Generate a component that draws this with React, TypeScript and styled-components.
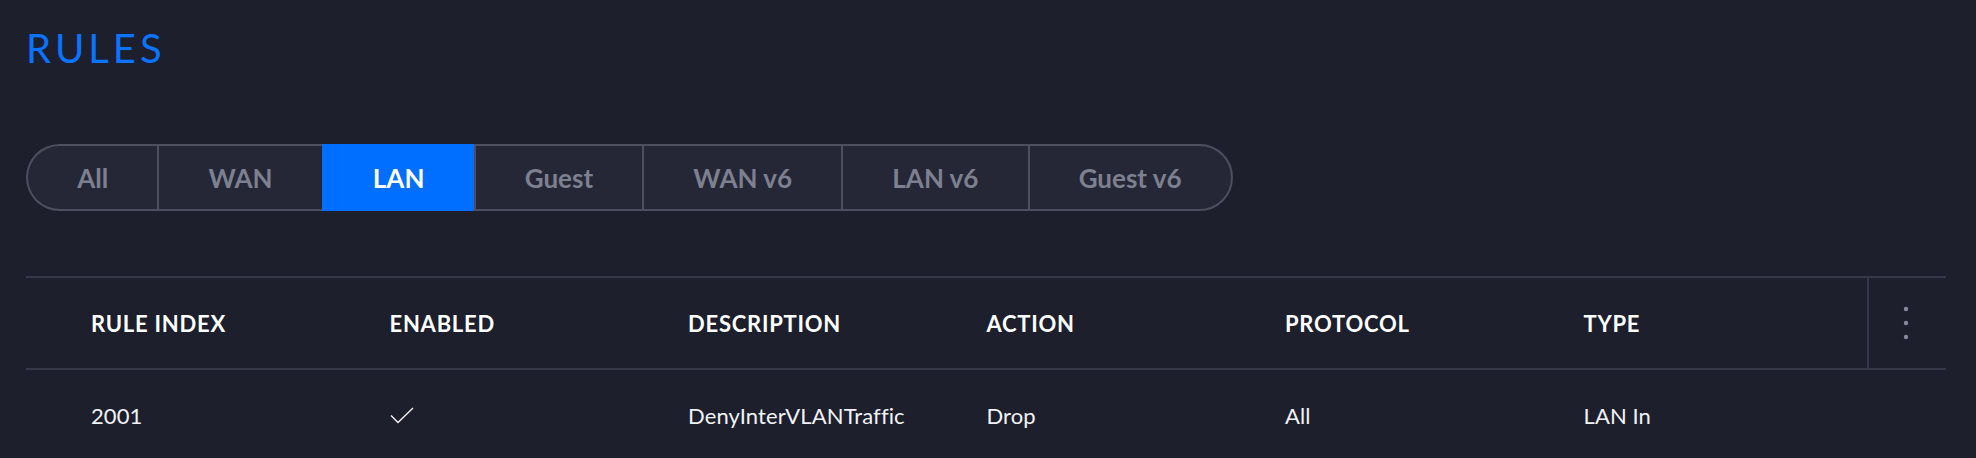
import { ReactElement } from 'react';
import styled, { createGlobalStyle } from 'styled-components';

const GlobalStyle = createGlobalStyle`
  html, body {
    margin: 0;
    padding: 0;
    background-color: #1d1f2d;
    overflow: hidden;
  }
  body {
    font-family: 'Lato', 'Open Sans', sans-serif;
    color: #ffffff;
  }
`;

const Page = styled.div`
  display: flex;
  flex-direction: column;
  align-items: flex-start;
  padding: 24px 30px 0 26px;
`;

const Title = styled.h1`
  margin: 0;
  font-size: 40px;
  line-height: 48px;
  font-weight: 400;
  letter-spacing: 4px;
  color: #0a73ff;
`;

const TabGroup = styled.div`
  display: inline-flex;
  margin-top: 72px;
  height: 67px;
`;

const Tab = styled.div<{ active?: boolean; first?: boolean; last?: boolean }>`
  display: flex;
  align-items: center;
  justify-content: center;
  padding: 0 49.15px;
  font-size: 26px;
  font-weight: 700;
  color: ${({ active }) => (active ? '#ffffff' : '#7d8090')};
  background-color: ${({ active }) => (active ? '#006fff' : '#252736')};
  border: 2px solid ${({ active }) => (active ? '#006fff' : '#4d4f5e')};
  border-right-width: ${({ last }) => (last ? '2px' : '0')};
  border-radius: ${({ first, last }) => (first ? '34px 0 0 34px' : last ? '0 34px 34px 0' : '0')};
`;

const Table = styled.div`
  align-self: stretch;
  margin-top: 65px;
  display: flex;
  flex-direction: column;
`;

const Row = styled.div<{ header?: boolean }>`
  display: flex;
  height: 90px;
  border-top: ${({ header }) => (header ? '2px solid #363848' : 'none')};
  border-bottom: 2px solid #363848;
`;

const Cells = styled.div`
  flex: 1;
  display: grid;
  grid-template-columns: repeat(5, 298.5px) 1fr;
  align-items: center;
  padding-left: 65px;
`;

const Cell = styled.div<{ header?: boolean }>`
  font-size: 22px;
  font-weight: ${({ header }) => (header ? 700 : 400)};
  letter-spacing: ${({ header }) => (header ? '0.75px' : '0.1px')};
  color: ${({ header }) => (header ? '#ffffff' : '#f2f3f6')};
  white-space: nowrap;
`;

const MenuCell = styled.div<{ header?: boolean }>`
  width: 79px;
  display: flex;
  align-items: center;
  justify-content: center;
  padding-right: 3px;
  box-sizing: border-box;
  border-left: 2px solid ${({ header }) => (header ? '#363848' : 'transparent')};
`;

const headers = ['RULE INDEX', 'ENABLED', 'DESCRIPTION', 'ACTION', 'PROTOCOL', 'TYPE'];

const rules = [
  { index: '2001', enabled: true, description: 'DenyInterVLANTraffic', action: 'Drop', protocol: 'All', type: 'LAN In' },
];

const tabs = ['All', 'WAN', 'LAN', 'Guest', 'WAN v6', 'LAN v6', 'Guest v6'];

function Check(): ReactElement {
  return (
    <svg width="24" height="17" viewBox="0 0 24 17" fill="none">
      <polyline points="1,8.5 8,15.5 23,1" stroke="#f2f3f6" strokeWidth="1.4" />
    </svg>
  );
}

function Dots(): ReactElement {
  return (
    <svg width="6" height="34" viewBox="0 0 6 34">
      <circle cx="3" cy="3" r="2.2" fill="#878a99" />
      <circle cx="3" cy="17" r="2.2" fill="#878a99" />
      <circle cx="3" cy="31" r="2.2" fill="#878a99" />
    </svg>
  );
}

function App(): ReactElement {
  const active = 'LAN';
  return (
    <>
      <GlobalStyle />
      <Page>
        <Title>RULES</Title>
        <TabGroup>
          {tabs.map((t, i) => (
            <Tab key={t} active={t === active} first={i === 0} last={i === tabs.length - 1}>
              {t}
            </Tab>
          ))}
        </TabGroup>
        <Table>
          <Row header>
            <Cells>
              {headers.map((h) => (
                <Cell header key={h}>
                  {h}
                </Cell>
              ))}
            </Cells>
            <MenuCell header>
              <Dots />
            </MenuCell>
          </Row>
          {rules.map((r) => (
            <Row key={r.index}>
              <Cells>
                <Cell>{r.index}</Cell>
                <Cell>{r.enabled ? <Check /> : null}</Cell>
                <Cell>{r.description}</Cell>
                <Cell>{r.action}</Cell>
                <Cell>{r.protocol}</Cell>
                <Cell>{r.type}</Cell>
              </Cells>
              <MenuCell />
            </Row>
          ))}
        </Table>
      </Page>
    </>
  );
}

export default App;
